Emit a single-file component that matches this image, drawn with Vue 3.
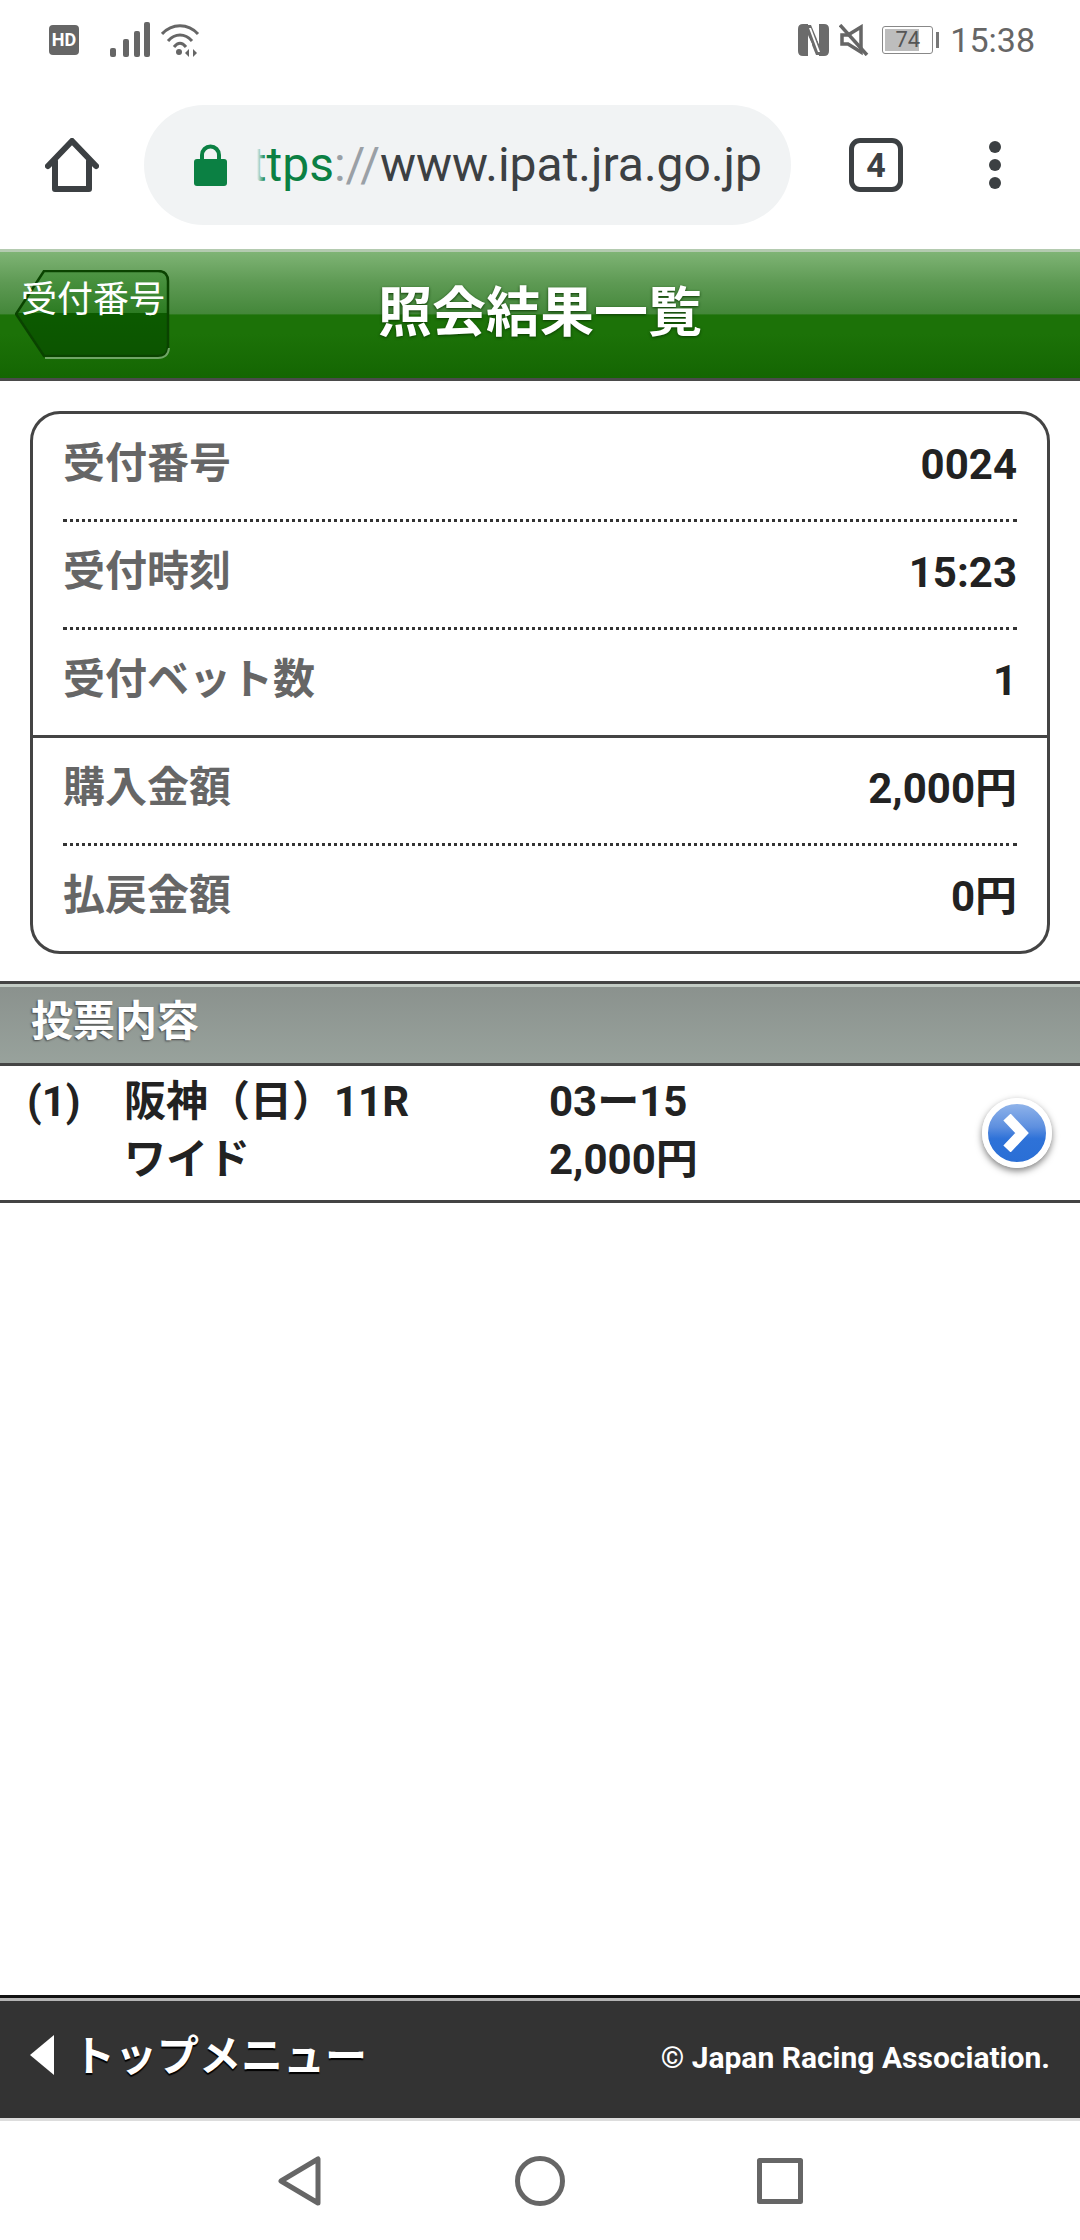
<template>
  <div class="page">
    <div class="status">
      <div class="status-left">
        <span class="hd">HD</span>
        <svg class="signal" width="40" height="36" viewBox="0 0 40 36">
          <rect x="0" y="26" width="6" height="9" rx="2" />
          <rect x="13" y="17" width="6" height="18" rx="2" />
          <rect x="24" y="9" width="6" height="26" rx="2" />
          <rect x="34" y="0" width="6" height="35" rx="2" />
        </svg>
        <svg class="wifi" width="40" height="36" viewBox="0 0 40 36" fill="none" stroke="#666" stroke-width="3">
          <path d="M1 12C11 1 27 1 37 12" />
          <path d="M7 19C14 11 24 11 31 19" />
          <path d="M13 25C17 20 21 20 25 25" />
          <circle cx="18" cy="30" r="3" fill="#666" stroke="none" />
          <path d="M28 27l-4 4 4 4zM32 27l4 4-4 4z" fill="#666" stroke="none" />
        </svg>
      </div>
      <div class="status-right">
        <svg width="31" height="32" viewBox="0 0 31 32">
          <path d="M5 0h5v32H5q-5 0-5-5V5q0-5 5-5zM21 0h5q5 0 5 5v22q0 5-5 5h-5z" fill="#6b6b6b" />
          <path d="M8 1h5l10 24v6h-5L8 6z" fill="#6b6b6b" />
          <path d="M11 4h2l9 24h-2zM11 14l3 6v9h-3zM19 3h2v17l-2-5z" fill="#fff" />
        </svg>
        <svg class="mute" width="30" height="32" viewBox="0 0 30 32" fill="none" stroke="#666" stroke-width="3.500">
          <path d="M3 11v9h6l13 8V3L9 11z" />
          <path d="M1 1l27 30" />
        </svg>
        <div class="battery">
          <div class="battery-box"><span class="battery-fill"></span><span class="battery-num">74</span></div>
          <span class="battery-tip"></span>
        </div>
        <span class="clock">15:38</span>
      </div>
    </div>

    <div class="toolbar">
      <svg class="home" width="54" height="54" viewBox="0 0 54 54" fill="none" stroke="#3c4043" stroke-width="6" stroke-linejoin="round" stroke-linecap="round">
        <path d="M3 28L27 3l24 25M10 23v28h34V23" />
      </svg>
      <div class="omnibox">
        <svg class="lock" width="33" height="43" viewBox="0 0 33 43">
          <path d="M8 20v-8a8.500 8.500 0 0 1 17 0v8" fill="none" stroke="#0b8043" stroke-width="4" />
          <rect x="0" y="16" width="33" height="27" rx="3" fill="#0b8043" />
        </svg>
        <div class="url"><span class="u-text"><span class="u-green">ttps</span><span class="u-grey">://</span>www.ipat.jra.go.jp</span></div>
      </div>
      <div class="tabs">4</div>
      <div class="dots"><i></i><i></i><i></i></div>
    </div>

    <header class="title-bar">
      <div class="back-btn">
        <svg class="back-shape" width="155" height="90" viewBox="0 0 155 90">
          <defs>
            <linearGradient id="backFill" x1="0" y1="0" x2="0" y2="1">
              <stop offset="0" stop-color="#4f9645" />
              <stop offset="0.5" stop-color="#2c7b22" />
              <stop offset="0.5" stop-color="#0c5a00" />
              <stop offset="1" stop-color="#0c5400" />
            </linearGradient>
          </defs>
          <path d="M1 44L29 1H143Q153 1 153 11V76Q153 86 143 86H29Z" fill="url(#backFill)" stroke="#0a4300" stroke-width="2.500" />
          <path d="M30 88H143Q153 88 154 78" fill="none" stroke="#6fa565" stroke-width="2" />
        </svg>
        <span class="back-label">受付番号</span>
      </div>
      <h1>照会結果一覧</h1>
    </header>

    <section class="card">
      <div v-for="row in summary" :key="row.label" class="card-row" :class="row.line">
        <span class="card-label">{{ row.label }}</span>
        <span class="card-value">{{ row.value }}</span>
      </div>
    </section>

    <h2 class="section-bar">投票内容</h2>

    <div class="ticket">
      <div class="ticket-no">(1)</div>
      <div class="ticket-info">
        <div>阪神（日）11R</div>
        <div>ワイド</div>
      </div>
      <div class="ticket-bet">
        <div>03ー15</div>
        <div>2,000円</div>
      </div>
      <div class="go">
        <svg width="28" height="38" viewBox="0 0 28 38" fill="none" stroke="#fff" stroke-width="10">
          <path d="M4 3l15 16L4 35" />
        </svg>
      </div>
    </div>

    <div class="spacer"></div>

    <footer class="foot">
      <div class="foot-left"><span class="arrow"></span><span class="foot-link">トップメニュー</span></div>
      <div class="foot-right">© Japan Racing Association.</div>
    </footer>

    <nav class="nav">
      <svg width="46" height="50" viewBox="0 0 46 50" fill="none" stroke="#666" stroke-width="5" stroke-linejoin="round">
        <path d="M41 3v44L4 25z" />
      </svg>
      <svg width="50" height="50" viewBox="0 0 50 50" fill="none" stroke="#666" stroke-width="5">
        <circle cx="25" cy="25" r="22.5" />
      </svg>
      <svg width="46" height="46" viewBox="0 0 46 46" fill="none" stroke="#666" stroke-width="5" stroke-linejoin="round">
        <rect x="2.500" y="2.500" width="41" height="41" />
      </svg>
    </nav>
  </div>
</template>

<script setup>
const summary = [
  { label: "受付番号", value: "0024", line: "dotted" },
  { label: "受付時刻", value: "15:23", line: "dotted" },
  { label: "受付ベット数", value: "1", line: "solid" },
  { label: "購入金額", value: "2,000円", line: "dotted" },
  { label: "払戻金額", value: "0円", line: "" },
];
</script>

<style>
html,
body {
  margin: 0;
  background: #fff;
}
</style>

<style scoped>
.page {
  width: 1080px;
  height: 2240px;
  display: flex;
  flex-direction: column;
  overflow: hidden;
  background: #fff;
  font-family: Roboto, "Noto Sans CJK JP", sans-serif;
  color: #222;
}

.status {
  height: 80px;
  flex: none;
  display: flex;
  justify-content: space-between;
  align-items: center;
  padding: 0 45px 0 49px;
}

.status-left,
.status-right {
  display: flex;
  align-items: center;
}

.hd {
  width: 30px;
  height: 30px;
  border-radius: 4px;
  background: #666;
  color: #fff;
  font-size: 18px;
  font-weight: 700;
  line-height: 30px;
  text-align: center;
}

.signal {
  margin-left: 31px;
  fill: #666;
}

.wifi {
  margin-left: 11px;
}

.status-right {
  height: 32px;
}

.mute {
  margin-left: 10px;
}

.battery {
  margin-left: 13px;
  display: flex;
  align-items: center;
  gap: 3px;
}

.battery-box {
  position: relative;
  width: 51px;
  height: 28px;
  box-sizing: border-box;
  border: 1px solid #888;
  border-radius: 3px;
}

.battery-fill {
  position: absolute;
  left: 2px;
  top: 2px;
  bottom: 2px;
  width: 34px;
  background: #bdbdbd;
}

.battery-num {
  position: relative;
  display: block;
  text-align: center;
  font-size: 22px;
  line-height: 26px;
  color: #555;
}

.battery-tip {
  width: 3px;
  height: 16px;
  background: #777;
}

.clock {
  margin-left: 11px;
  font-size: 34px;
  color: #666;
}

.toolbar {
  height: 169px;
  flex: none;
  display: flex;
  align-items: center;
}

.home {
  margin-left: 45px;
}

.omnibox {
  margin-left: 45px;
  width: 647px;
  height: 120px;
  box-sizing: border-box;
  border-radius: 60px;
  background: #f1f3f4;
  display: flex;
  align-items: center;
  padding-left: 50px;
}

.url {
  position: relative;
  margin-left: 30px;
  width: 505px;
  overflow: hidden;
  display: flex;
  justify-content: flex-end;
  font-size: 48px;
  color: #3c4043;
  white-space: nowrap;
}

.u-text {
  flex: none;
}

.url::after {
  content: "";
  position: absolute;
  left: 0;
  top: 0;
  bottom: 0;
  width: 8px;
  background: linear-gradient(90deg, #f1f3f4, rgba(241, 243, 244, 0));
}

.u-green {
  color: #0b8043;
}

.u-grey {
  color: #9aa0a6;
}

.tabs {
  margin-left: 58px;
  width: 44px;
  height: 44px;
  border: 5px solid #3c4043;
  border-radius: 11px;
  font-size: 34px;
  font-weight: 700;
  line-height: 44px;
  text-align: center;
  color: #3c4043;
}

.dots {
  margin-left: 86px;
  display: flex;
  flex-direction: column;
  gap: 6px;
}

.dots i {
  width: 12px;
  height: 12px;
  border-radius: 50%;
  background: #3c4043;
}

.title-bar {
  height: 132px;
  flex: none;
  box-sizing: border-box;
  position: relative;
  border-top: 3px solid #b4cbb0;
  border-bottom: 3px solid #4a4a4a;
  background: linear-gradient(#7fb475 0%, #5e9a54 24%, #44873a 49%, #1c7208 50%, #1c7208 65%, #146602 100%);
  display: flex;
  align-items: center;
  justify-content: center;
}

.title-bar h1 {
  margin: 0 0 14px;
  font-size: 54px;
  font-weight: 700;
  color: #fff;
  text-shadow: 0 1px 3px #0a3a00;
}

.back-btn {
  position: absolute;
  left: 15px;
  top: 18px;
  width: 155px;
  height: 90px;
}

.back-shape {
  display: block;
}

.back-label {
  position: absolute;
  left: 6px;
  top: 5px;
  font-size: 36px;
  line-height: 50px;
  color: #fff;
  white-space: nowrap;
}

.card {
  margin: 30px 30px 0;
  height: 543px;
  flex: none;
  box-sizing: border-box;
  border: 3px solid #444;
  border-radius: 30px;
  padding: 0 30px;
  display: flex;
  flex-direction: column;
}

.card-row {
  flex: 1;
  display: flex;
  justify-content: space-between;
  align-items: center;
  font-size: 42px;
  font-weight: 700;
}

.card-row.dotted {
  border-bottom: 3px dotted #333;
}

.card-row.solid {
  border-bottom: 3px solid #444;
  margin: 0 -30px;
  padding: 0 30px;
}

.card-label,
.card-value {
  display: block;
  height: 50px;
  line-height: 50px;
}

.card-label {
  color: #666;
  margin-bottom: 5px;
}

.card-value {
  color: #222;
  margin-bottom: 3px;
}

.section-bar {
  margin: 27px 0 0;
  height: 85px;
  flex: none;
  box-sizing: border-box;
  border-top: 3px solid #444;
  border-bottom: 3px solid #444;
  box-shadow: inset 0 3px 0 #c3ccc5;
  background: linear-gradient(#8a918d, #98a29c);
  padding-left: 31px;
  font-size: 42px;
  font-weight: 700;
  line-height: 76px;
  color: #fff;
  text-shadow: -1px 1px 2px #444;
}

.ticket {
  height: 137px;
  flex: none;
  box-sizing: border-box;
  border-bottom: 3px solid #444;
  position: relative;
  display: flex;
  padding-top: 7px;
  font-size: 42px;
  font-weight: 700;
  line-height: 58px;
  color: #222;
}

.ticket-no {
  width: 124px;
  padding-left: 27px;
  box-sizing: border-box;
}

.ticket-info {
  width: 425px;
}

.ticket-bet {
  flex: 1;
}

.go {
  position: absolute;
  right: 28px;
  top: 32px;
  width: 58px;
  height: 58px;
  border: 6px solid #fff;
  border-radius: 50%;
  background: linear-gradient(#8fb3ea 0%, #5d8fdf 40%, #2e72d8 60%, #2a6fd6 100%);
  box-shadow: 0 3px 7px rgba(0, 0, 0, 0.5);
  display: flex;
  align-items: center;
  justify-content: center;
}

.spacer {
  flex: 1;
}

.foot {
  height: 126px;
  flex: none;
  box-sizing: border-box;
  border-top: 3px solid #111;
  background: #333;
  box-shadow: inset 0 3px 0 #b5b5b5;
  border-bottom: 3px solid #ddd;
  display: flex;
  justify-content: space-between;
  align-items: center;
  padding: 0 30px 6px 30px;
  color: #fff;
  font-weight: 700;
}

.foot-left {
  display: flex;
  align-items: center;
  font-size: 42px;
  text-shadow: 0 2px 1px #000;
}

.foot-link {
  margin-bottom: 5px;
}

.arrow {
  width: 0;
  height: 0;
  margin-right: 19px;
  border-style: solid;
  border-width: 20px 24px 20px 0;
  border-color: transparent #fff transparent transparent;
}

.foot-right {
  font-size: 30px;
  padding-top: 4px;
}

.nav {
  height: 119px;
  flex: none;
  display: flex;
  justify-content: center;
  align-items: center;
  gap: 192px;
}
</style>
